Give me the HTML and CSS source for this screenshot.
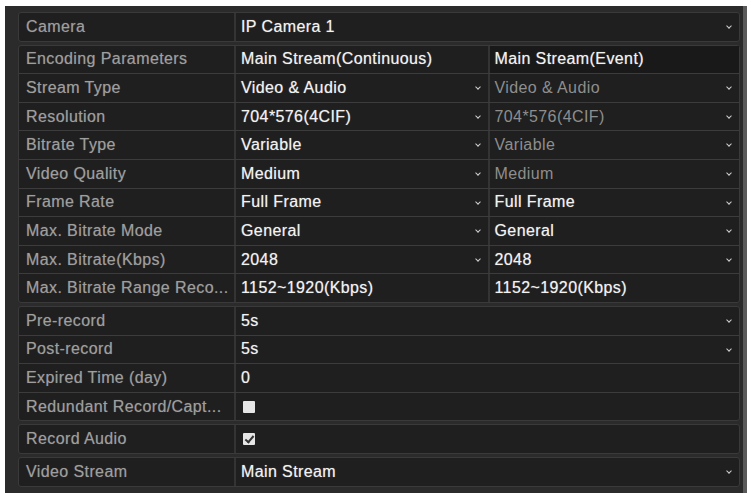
FILE: index.html
```html
<!DOCTYPE html>
<html>

<head>
	<title>Record Parameters</title>
	<link rel="stylesheet" href="styles.css">
</head>

<body>
	<div class="panel">
		<!-- Camera -->
		<div class="group">
			<div class="row">
				<div class="label">Camera</div>
				<div class="value">IP Camera 1<span class="arrow"></span></div>
			</div>
		</div>

		<!-- Encoding parameters -->
		<div class="group">
			<div class="row two">
				<div class="label">Encoding Parameters</div>
				<div class="value head">Main Stream(Continuous)</div>
				<div class="value head event">Main Stream(Event)</div>
			</div>
			<div class="row two">
				<div class="label">Stream Type</div>
				<div class="value">Video &amp; Audio<span class="arrow"></span></div>
				<div class="value off">Video &amp; Audio<span class="arrow"></span></div>
			</div>
			<div class="row two">
				<div class="label">Resolution</div>
				<div class="value">704*576(4CIF)<span class="arrow"></span></div>
				<div class="value off">704*576(4CIF)<span class="arrow"></span></div>
			</div>
			<div class="row two">
				<div class="label">Bitrate Type</div>
				<div class="value">Variable<span class="arrow"></span></div>
				<div class="value off">Variable<span class="arrow"></span></div>
			</div>
			<div class="row two">
				<div class="label">Video Quality</div>
				<div class="value">Medium<span class="arrow"></span></div>
				<div class="value off">Medium<span class="arrow"></span></div>
			</div>
			<div class="row two">
				<div class="label">Frame Rate</div>
				<div class="value">Full Frame<span class="arrow"></span></div>
				<div class="value">Full Frame<span class="arrow"></span></div>
			</div>
			<div class="row two">
				<div class="label">Max. Bitrate Mode</div>
				<div class="value">General<span class="arrow"></span></div>
				<div class="value">General<span class="arrow"></span></div>
			</div>
			<div class="row two">
				<div class="label">Max. Bitrate(Kbps)</div>
				<div class="value">2048<span class="arrow"></span></div>
				<div class="value">2048<span class="arrow"></span></div>
			</div>
			<div class="row two">
				<div class="label">Max. Bitrate Range Reco...</div>
				<div class="value">1152~1920(Kbps)</div>
				<div class="value">1152~1920(Kbps)</div>
			</div>
		</div>

		<!-- Record time -->
		<div class="group">
			<div class="row">
				<div class="label">Pre-record</div>
				<div class="value">5s<span class="arrow"></span></div>
			</div>
			<div class="row">
				<div class="label">Post-record</div>
				<div class="value">5s<span class="arrow"></span></div>
			</div>
			<div class="row">
				<div class="label">Expired Time (day)</div>
				<div class="value">0</div>
			</div>
			<div class="row">
				<div class="label">Redundant Record/Capt...</div>
				<div class="value"><span class="check"></span></div>
			</div>
		</div>

		<div class="group">
			<div class="row">
				<div class="label">Record Audio</div>
				<div class="value"><span class="check on"></span></div>
			</div>
		</div>

		<div class="group">
			<div class="row">
				<div class="label">Video Stream</div>
				<div class="value">Main Stream<span class="arrow"></span></div>
			</div>
		</div>
	</div>
</body>

</html>
```

FILE: styles.css
```css
body {
	margin: 0;
	background-color: #fff;
	font-family: "Liberation Sans", Arial, sans-serif;
	font-size: 16px;
	letter-spacing: 0.4px;
}

.panel {
	margin: 6px 4px 2px 5px;
	padding: 6px 3px 6px 13px;
	background-color: #2b2b2b;
	border-right: 4px solid #5a5a5a;
	display: flex;
	flex-direction: column;
	gap: 3px;
}

.group {
	border: 1px solid #3a3a3a;
	border-radius: 3px;
	background-color: #1f1f1f;
}

.row {
	display: grid;
	grid-template-columns: 217px 1fr;
	height: 27.6px;
	border-top: 1px solid #3c3c3c;
}

.row:first-child {
	border-top: none;
}

.row.two {
	grid-template-columns: 217px 1fr 1fr;
}

.label {
	display: flex;
	align-items: center;
	padding-left: 7px;
	color: #9e9e9e;
	border-right: 2px solid #343434;
	white-space: nowrap;
	text-shadow: 0 0 1px rgba(160, 160, 160, 0.5);
}

.value {
	position: relative;
	display: flex;
	align-items: center;
	padding-left: 5px;
	color: #f2f2f2;
	white-space: nowrap;
	text-shadow: 0 0 1px rgba(255, 255, 255, 0.5);
}

.row.two .value + .value {
	border-left: 2px solid #343434;
}

.value.event {
	background-color: #191919;
}

.value.off {
	color: #8e8e8e;
	text-shadow: none;
}

/* mũi tên của ô chọn */
.arrow {
	position: absolute;
	right: 8px;
	top: 11px;
	width: 3px;
	height: 3px;
	border-right: 1.5px solid #d0d0d0;
	border-bottom: 1.5px solid #d0d0d0;
	transform: rotate(45deg);
}

.check {
	width: 12px;
	height: 12px;
	margin-left: 2px;
	background-color: #e6e6e6;
	border-radius: 1px;
	position: relative;
}

.check.on::after {
	content: "";
	position: absolute;
	left: 4px;
	top: 1px;
	width: 3px;
	height: 7px;
	border-right: 2px solid #333;
	border-bottom: 2px solid #333;
	transform: rotate(40deg);
}
```
